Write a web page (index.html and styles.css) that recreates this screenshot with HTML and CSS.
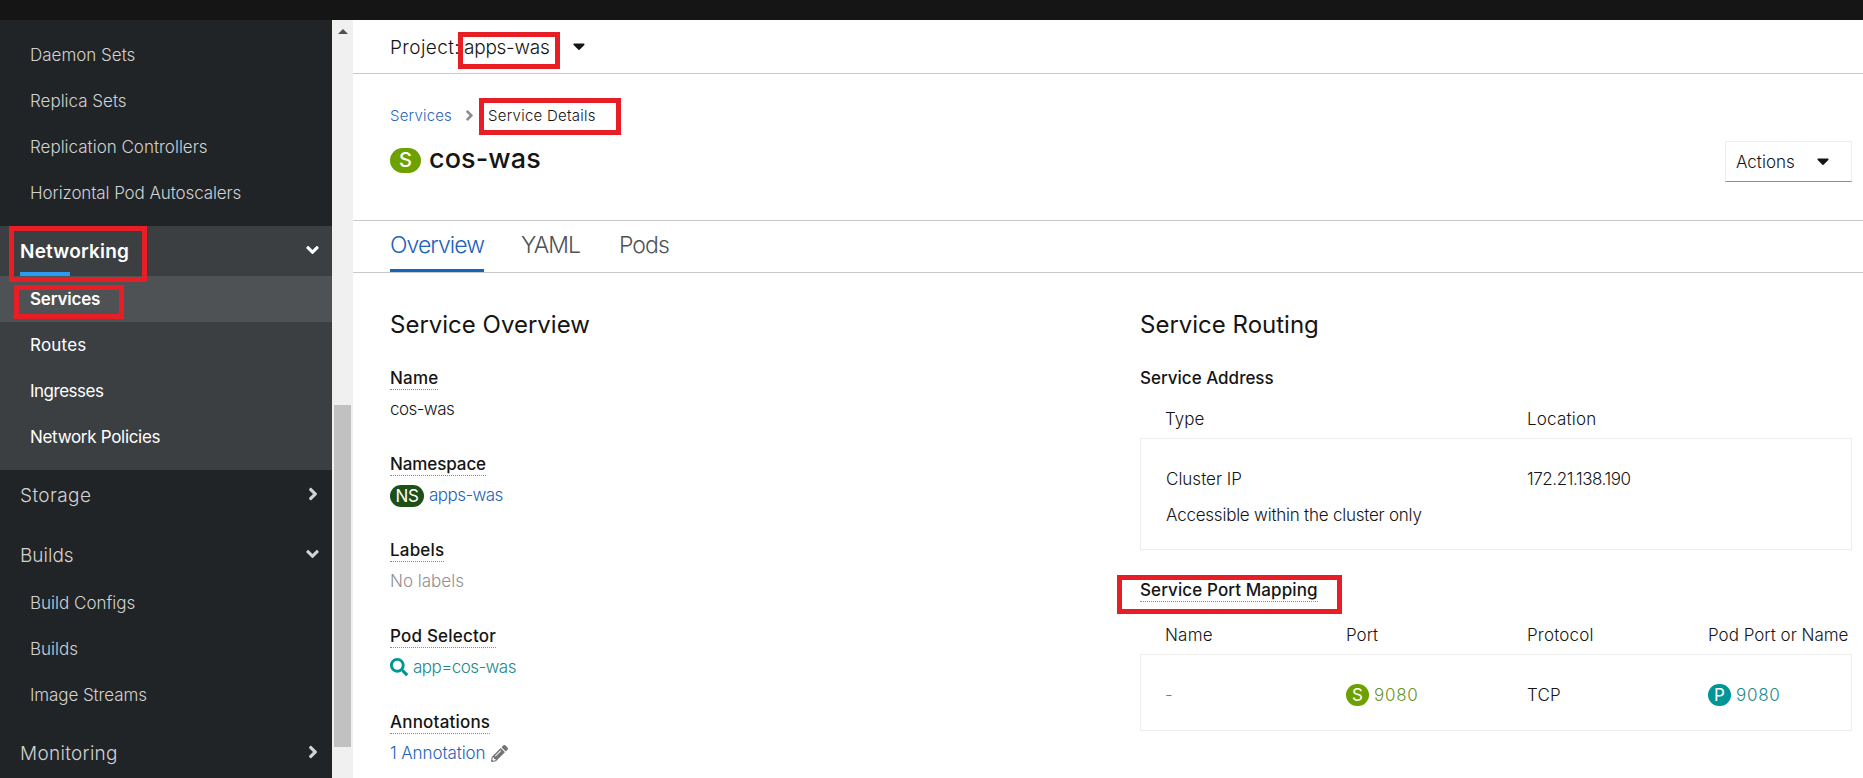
FILE: index.html
```html
<!DOCTYPE html>
<html lang="en">
<head>
<meta charset="utf-8">
<title>cos-was · Service Details</title>
<link rel="stylesheet" href="styles.css">
</head>
<body>
<svg class="defs" aria-hidden="true">
  <symbol id="angle-down" viewBox="0 0 320 512"><path d="M143 352.3L7 216.3c-9.4-9.4-9.4-24.6 0-33.9l22.6-22.6c9.4-9.4 24.6-9.4 33.9 0l96.4 96.4 96.4-96.4c9.4-9.4 24.6-9.4 33.9 0l22.6 22.6c9.4 9.4 9.4 24.6 0 33.9l-136 136c-9.2 9.4-24.4 9.4-33.8 0z"/></symbol>
  <symbol id="angle-right" viewBox="0 0 256 512"><path d="M224.3 273l-136 136c-9.4 9.4-24.6 9.4-33.9 0l-22.6-22.6c-9.4-9.4-9.4-24.6 0-33.9l96.4-96.4-96.4-96.4c-9.4-9.4-9.4-24.6 0-33.9L54.3 103c9.4-9.4 24.6-9.4 33.9 0l136 136c9.5 9.4 9.5 24.6.1 34z"/></symbol>
  <symbol id="caret-down" viewBox="0 0 320 512"><path d="M31.3 192h257.3c17.8 0 26.7 21.5 14.1 34.1L174.1 354.8c-7.8 7.8-20.5 7.8-28.3 0L17.2 226.1C4.6 213.5 13.5 192 31.3 192z"/></symbol>
  <symbol id="search" viewBox="0 0 512 512"><path d="M505 442.7L405.3 343c-4.5-4.5-10.6-7-17-7H372c27.6-35.3 44-79.7 44-128C416 93.1 322.9 0 208 0S0 93.1 0 208s93.1 208 208 208c48.3 0 92.7-16.4 128-44v16.3c0 6.4 2.5 12.5 7 17l99.7 99.7c9.4 9.4 24.6 9.4 33.9 0l28.3-28.3c9.4-9.4 9.4-24.6.1-34zM208 336c-70.7 0-128-57.2-128-128 0-70.7 57.2-128 128-128 70.7 0 128 57.2 128 128 0 70.7-57.2 128-128 128z"/></symbol>
  <symbol id="pencil" viewBox="0 0 512 512"><path d="M497.9 142.1l-46.1 46.1c-4.7 4.7-12.3 4.7-17 0l-111-111c-4.7-4.7-4.7-12.3 0-17l46.1-46.1c18.7-18.7 49.1-18.7 67.9 0l60.1 60.1c18.8 18.7 18.8 49.1 0 67.9zM284.2 99.8L21.6 362.4.4 483.9c-2.9 16.4 11.4 30.6 27.8 27.8l121.5-21.3 262.6-262.6c4.7-4.7 4.7-12.3 0-17l-111-111c-4.8-4.7-12.4-4.7-17.1 0zM124.1 339.9c-5.5-5.5-5.5-14.3 0-19.8l154-154c5.5-5.5 14.3-5.5 19.8 0s5.5 14.3 0 19.8l-154 154c-5.5 5.5-14.3 5.5-19.8 0zM88 424h48v36.3l-64.5 11.3-31.1-31.1L51.7 376H88v48z"/></symbol>
</svg>

<header class="masthead"></header>
<div class="shell">
  <nav class="sidebar">
    <section class="group group-first">
      <a class="item">Daemon Sets</a>
      <a class="item">Replica Sets</a>
      <a class="item">Replication Controllers</a>
      <a class="item snug">Horizontal Pod Autoscalers</a>
    </section>
    <section class="group group-active">
      <div class="head"><span class="current">Networking</span><svg class="angle-down"><use href="#angle-down"/></svg></div>
      <a class="item selected">Services</a>
      <a class="item airy">Routes</a>
      <a class="item ingresses">Ingresses</a>
      <a class="item policies">Network Policies</a>
    </section>
    <section class="group">
      <div class="head"><span class="wide">Storage</span><svg class="angle-right"><use href="#angle-right"/></svg></div>
    </section>
    <section class="group">
      <div class="head"><span>Builds</span><svg class="angle-down"><use href="#angle-down"/></svg></div>
      <a class="item">Build Configs</a>
      <a class="item">Builds</a>
      <a class="item snug">Image Streams</a>
    </section>
    <section class="group">
      <div class="head"><span class="wider">Monitoring</span><svg class="angle-right"><use href="#angle-right"/></svg></div>
    </section>
  </nav>
  <div class="scrollbar"><i class="arrow"></i><i class="thumb"></i></div>

  <main class="main">
    <div class="project-bar">
      <span class="project-label">Project:</span><span class="project-name">apps-was</span>
      <svg class="caret"><use href="#caret-down"/></svg>
    </div>
    <div class="page-head">
      <div class="crumbs"><a class="crumb-link">Services</a><svg class="crumb-sep"><use href="#angle-right"/></svg><span class="crumb-here">Service Details</span></div>
      <div class="title-row">
        <h1 class="title"><span class="badge badge-lg green">S</span><span>cos-was</span></h1>
        <button class="actions"><span>Actions</span><svg class="caret"><use href="#caret-down"/></svg></button>
      </div>
    </div>
    <div class="tabs">
      <a class="tab tab-on">Overview</a><a class="tab tab-yaml">YAML</a><a class="tab tab-pods">Pods</a>
    </div>
    <div class="columns">
      <section class="overview">
        <h2 class="heading">Service Overview</h2>
        <div class="field"><span class="term airy">Name</span><div class="value tight">cos-was</div></div>
        <div class="field"><span class="term namespace">Namespace</span><div class="value link tight"><span class="badge badge-ns">NS</span>apps-was</div></div>
        <div class="field"><span class="term airy">Labels</span><div class="value muted">No labels</div></div>
        <div class="field"><span class="term airy">Pod Selector</span><div class="value teal-text tight"><svg class="search"><use href="#search"/></svg>app=cos-was</div></div>
        <div class="field"><span class="term airy">Annotations</span><div class="value link snug">1 Annotation<svg class="pencil"><use href="#pencil"/></svg></div></div>
      </section>
      <section class="routing">
        <h2 class="heading">Service Routing</h2>
        <span class="term plain">Service Address</span>
        <div class="row row-head address-head"><span>Type</span><span class="airy">Location</span></div>
        <div class="row box address-box">
          <div class="accessible"><div class="line">Cluster IP</div><div class="line access">Accessible within the cluster only</div></div>
          <div class="line ip">172.21.138.190</div>
        </div>
        <span class="term mapping">Service Port Mapping</span>
        <div class="row row-head"><span class="airy">Name</span><span>Port</span><span class="airy">Protocol</span><span>Pod Port or Name</span></div>
        <div class="row box port-box">
          <span class="port green-text">-</span>
          <span class="port green-text"><span class="badge green">S</span><span class="num">9080</span></span>
          <span class="airy">TCP</span>
          <span class="port teal-text"><span class="badge teal">P</span><span class="num">9080</span></span>
        </div>
      </section>
    </div>
  </main>
</div>

<i class="mark mark-networking"></i>
<i class="mark mark-services"></i>
<i class="mark mark-project"></i>
<i class="mark mark-details"></i>
<i class="mark mark-mapping"></i>
</body>
</html>
```
FILE: styles.css
```css
* { box-sizing: border-box; }
body {
  margin: 0;
  width: 1863px;
  height: 778px;
  overflow: hidden;
  position: relative;
  background: #fff;
  color: #151515;
  font: 300 17px/27px Inter, sans-serif;
}
.defs { position: absolute; width: 0; height: 0; }
svg { fill: currentColor; flex: none; }
h1, h2 { margin: 0; }

.masthead { height: 20px; background: #151515; }
.shell { display: flex; height: 758px; }

/* Sidebar */
.sidebar { width: 332px; flex: none; background: #212427; color: #d2d2d2; overflow: hidden; }
.group { padding-bottom: 10px; }
.group-first { padding-top: 12px; }
.group-active { background: #3c3f42; color: #fff; }
.head {
  display: flex;
  justify-content: space-between;
  height: 50px;
  padding: 0 13px 0 20px;
  font-size: 19px;
  line-height: 52px;
}
.head svg { height: 20px; margin-top: 14px; }
.angle-down { width: 13px; }
.angle-right { width: 10px; margin-right: 1px; }
.current {
  height: 50px;
  width: 50px;
  border-bottom: 4px solid #2b9af3;
  font-weight: 600;
  letter-spacing: .2px;
}
.item { display: block; height: 46px; padding-left: 30px; line-height: 46px; }
.group-active .item { font-weight: 400; }
.group-active .selected { background: #4f5255; font-weight: 600; letter-spacing: -.2px; }
.snug { letter-spacing: -.1px; }
.airy { letter-spacing: .2px; }
.wide { letter-spacing: .4px; }
.wider { letter-spacing: .3px; }
.tight { letter-spacing: -.55px; }
.ingresses { letter-spacing: -.5px; }
.policies { letter-spacing: -.3px; }

.scrollbar { width: 21px; flex: none; padding: 9px 2px 0; background: #f0f0f0; }
.arrow {
  display: block;
  width: 10px;
  height: 5px;
  margin-left: 4px;
  background: #505050;
  clip-path: polygon(50% 0, 100% 100%, 0 100%);
}
.thumb { display: block; height: 342px; margin-top: 371px; background: #c1c1c1; }

/* Main */
.main { flex: 1; min-width: 0; }
.project-bar {
  display: flex;
  height: 54px;
  padding-left: 37px;
  border-bottom: 1px solid #c9c9c9;
  font-size: 19px;
  line-height: 55px;
}
.project-label { width: 74px; letter-spacing: .4px; }
.project-name { width: 109px; letter-spacing: -.25px; }
.caret { width: 12px; height: 20px; }
.project-bar .caret { margin-top: 16px; }

.page-head { height: 147px; padding: 30px 11px 0 37px; border-bottom: 1px solid #c9c9c9; }
.crumbs { display: flex; height: 24px; font-size: 15px; line-height: 23px; }
.crumb-link { width: 75px; color: #2b66c0; letter-spacing: .2px; }
.crumb-sep { width: 9px; height: 17px; margin-top: 3px; color: #8a8d90; }
.crumb-here { margin-left: 14px; letter-spacing: .25px; }
.title-row { display: flex; justify-content: space-between; padding-top: 13px; }
.title { display: flex; align-items: center; height: 40px; font-size: 27px; font-weight: 500; line-height: 34px; letter-spacing: .1px; margin-top: -2px; }
.actions {
  display: flex;
  width: 127px;
  height: 41px;
  padding: 0 0 0 10px;
  border: 1px solid #ededed;
  border-bottom-color: #8a8d90;
  background: #fff;
  color: #151515;
  font: 300 17px/40px Inter, sans-serif;
}
.actions span { width: 81px; text-align: left; }
.actions .caret { margin-top: 9px; }

.tabs { display: flex; height: 52px; padding-left: 37px; border-bottom: 1px solid #c9c9c9; }
.tab { height: 51px; font-size: 23px; line-height: 49px; letter-spacing: -.95px; color: #4f5255; }
.tab-on { width: 94px; border-bottom: 3px solid #1664bc; color: #1c62bd; }
.tab-yaml { margin-left: 37px; width: 98px; }

.columns { display: flex; }
.overview { width: 787px; flex: none; padding: 35px 0 0 37px; }
.routing { flex: 1; min-width: 0; padding: 35px 11px 0 0; }
.heading { height: 57px; font-size: 24px; font-weight: 400; line-height: 34px; }
.field { height: 86px; }
.term { display: block; width: max-content; height: 25px; border-bottom: 1px dotted #8a8d90; font-weight: 500; }
.term.plain { border: 0; }
.namespace { letter-spacing: -.1px; }
.value { display: flex; align-items: center; height: 27px; margin-top: 6px; }
.link { color: #2464b8; }
.muted { color: #8f9194; }
.teal-text { color: #1d8a88; }
.green-text { color: #6b9425; }
.search { width: 18px; height: 18px; margin: -2px 5px 0 0; color: #009596; }
.pencil { width: 17px; height: 17px; margin-left: 6px; color: #737679; }

.badge {
  flex: none;
  width: 23px;
  height: 22px;
  margin-right: 5px;
  border-radius: 11px;
  color: #fff;
  font-size: 17px;
  font-weight: 400;
  line-height: 22px;
  letter-spacing: 0;
  text-align: center;
}
.badge-lg { width: 31px; height: 25px; margin: 3px 8px 0 0; border-radius: 13px; font-size: 20px; font-weight: 500; line-height: 25px; }
.badge-ns { width: 34px; background: #1e4f18; letter-spacing: -.4px; }
.green { background: #6ca100; }
.teal { background: #009596; }

.row { display: grid; grid-template-columns: repeat(4, 181px); padding-left: 25px; }
.address-head { grid-template-columns: 362px 1fr; margin-top: 15px; }
.row-head { height: 33px; line-height: 29px; }
.box { border: 1px solid #ededed; }
.address-box { grid-template-columns: 361px 1fr; height: 112px; padding-top: 22px; }
.line { height: 36px; line-height: 36px; }
.access { letter-spacing: -.23px; }
.ip { letter-spacing: -.43px; }
.mapping { margin: 27px 0 19px; letter-spacing: .1px; }
.port-box { height: 77px; padding: 4px 0 0 24px; align-items: center; line-height: 22px; }
.port { display: flex; align-items: center; }
.num { letter-spacing: .7px; }

/* Highlight frames drawn over the page */
.mark { position: absolute; border: 5px solid #e81e26; }
.mark-networking { left: 9px; top: 226px; width: 138px; height: 56px; }
.mark-services { left: 14px; top: 285px; width: 110px; height: 34px; }
.mark-project { left: 458px; top: 32px; width: 102px; height: 37px; }
.mark-details { left: 479px; top: 98px; width: 142px; height: 37px; }
.mark-mapping { left: 1117px; top: 575px; width: 225px; height: 39px; }
```
